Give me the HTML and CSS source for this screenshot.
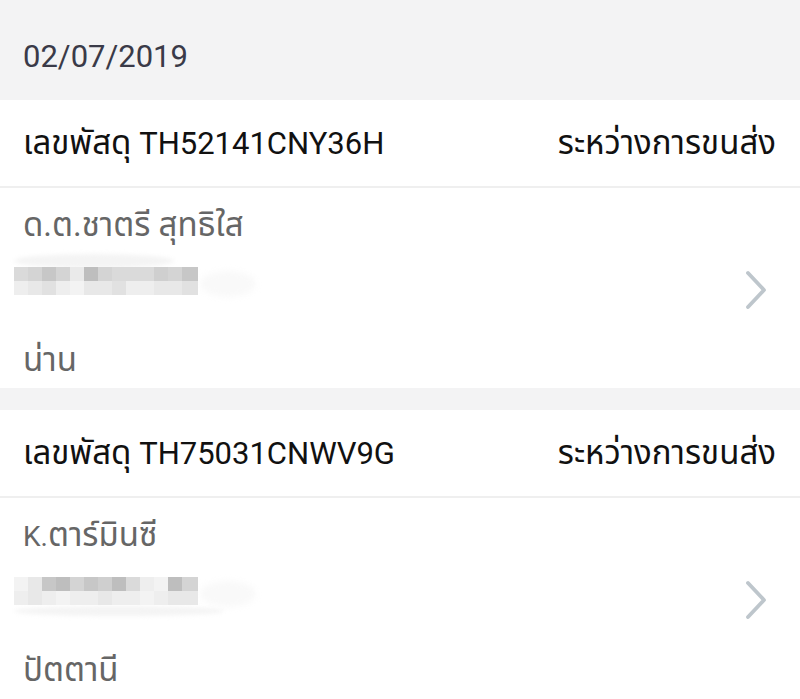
FILE: index.html
```html
<!DOCTYPE html>
<html lang="th">
<head>
<meta charset="utf-8">
<title>พัสดุ</title>
<link rel="stylesheet" href="styles.css">
</head>
<body>
<div class="page">
  <div class="date-head">02/07/2019</div>

  <section class="card">
    <div class="card-head">
      <span class="track"><span class="th">เลขพัสดุ</span> TH52141CNY36H</span>
      <span class="status th">ระหว่างการขนส่ง</span>
    </div>
    <div class="card-body">
      <div class="info">
        <div class="name"><span class="th">ด.ต.ชาตรี สุทธิใส</span></div>
        <div class="phone">
          <div class="halo halo-top"></div>
          <div class="pix-row">
            <span class="p s3"></span><span class="p s4"></span><span class="p s6"></span><span class="p s4"></span><span class="p s1"></span><span class="p s7"></span><span class="p s4"></span><span class="p s3"></span><span class="p s3"></span><span class="p s3"></span><span class="p s5"></span><span class="p s4"></span><span class="p s6"></span>
          </div>
          <div class="pix-row">
            <span class="p t1"></span><span class="p t2"></span><span class="p t3"></span><span class="p t1"></span><span class="p t0"></span><span class="p t2"></span><span class="p t2"></span><span class="p t3"></span><span class="p t1"></span><span class="p t1"></span><span class="p t2"></span><span class="p t2"></span><span class="p t3"></span>
          </div>
          <div class="fade"></div>
        </div>
        <div class="city"><span class="th">น่าน</span></div>
      </div>
      <svg class="chev" width="24" height="40" viewBox="0 0 24 40"><polyline points="4,3 20,20 4,37" fill="none" stroke="#bec6cc" stroke-width="3.8" stroke-linecap="round" stroke-linejoin="round"/></svg>
    </div>
  </section>

  <section class="card last">
    <div class="card-head">
      <span class="track"><span class="th">เลขพัสดุ</span> TH75031CNWV9G</span>
      <span class="status th">ระหว่างการขนส่ง</span>
    </div>
    <div class="card-body">
      <div class="info">
        <div class="name">K.<span class="th">ตาร์มินซี</span></div>
        <div class="phone">
          <div class="pix-row">
            <span class="p t0"></span><span class="p t2"></span><span class="p s6"></span><span class="p s7"></span><span class="p s4"></span><span class="p s6"></span><span class="p s5"></span><span class="p s7"></span><span class="p s3"></span><span class="p t1"></span><span class="p t0"></span><span class="p s7"></span><span class="p s4"></span>
          </div>
          <div class="pix-row">
            <span class="p t1"></span><span class="p t2"></span><span class="p t1"></span><span class="p t0"></span><span class="p t1"></span><span class="p t1"></span><span class="p t2"></span><span class="p t1"></span><span class="p t1"></span><span class="p t0"></span><span class="p t1"></span><span class="p t2"></span><span class="p t2"></span>
          </div>
          <div class="halo halo-bottom"></div>
          <div class="fade"></div>
        </div>
        <div class="city"><span class="th">ปัตตานี</span></div>
      </div>
      <svg class="chev" width="24" height="40" viewBox="0 0 24 40"><polyline points="4,3 20,20 4,37" fill="none" stroke="#bec6cc" stroke-width="3.8" stroke-linecap="round" stroke-linejoin="round"/></svg>
    </div>
  </section>
</div>
</body>
</html>
```

FILE: styles.css
```css
html, body {
  margin: 0;
  padding: 0;
}
body {
  background: #f3f3f4;
  font-family: Roboto, "Noto Sans Thai", "Noto Sans Thai UI", "Noto Sans", "DejaVu Sans", sans-serif;
  overflow: hidden;
}
.page {
  width: 800px;
  display: flex;
  flex-direction: column;
}
.date-head {
  height: 100px;
  padding-left: 23px;
  font-size: 31px;
  line-height: 114px;
  color: #3a3a48;
}
.card {
  background: #fff;
}
.card + .card {
  margin-top: 22px;
}
.th {
  font-size: 33px;
}
.card-head {
  height: 86px;
  display: flex;
  align-items: center;
  justify-content: space-between;
  padding: 0 24px 0 23px;
  border-bottom: 2px solid #efefef;
  font-size: 31px;
  line-height: 40px;
  color: #111;
}
.card-body {
  height: 200px;
  display: flex;
  align-items: center;
  justify-content: space-between;
  padding: 0 32px 0 23px;
}
.card.last .card-body {
  height: 201px;
}
.info {
  display: flex;
  flex-direction: column;
  align-self: stretch;
}
.name {
  font-size: 28px;
  line-height: 40px;
  height: 40px;
  margin-top: 17px;
  color: #666;
}
.city {
  font-size: 28px;
  line-height: 40px;
  height: 40px;
  margin-top: 29px;
  color: #666;
}
.phone {
  position: relative;
  margin-left: -9px;
  margin-top: 6px;
  height: 60px;
  display: flex;
  flex-direction: column;
  justify-content: center;
}
.pix-row {
  display: flex;
  position: relative;
  z-index: 1;
}
.p {
  width: 14px;
  height: 14px;
  display: block;
}
.pix-row .p:last-child { width: 16px; }
.s1 { background: #eaeaea; }
.s3 { background: #dadada; }
.s4 { background: #d4d4d4; }
.s5 { background: #cfcfcf; }
.s6 { background: #c7c7c7; }
.s7 { background: #bebebe; }
.t0 { background: #f3f3f3; }
.t1 { background: #eeeeee; }
.t2 { background: #e8e8e8; }
.t3 { background: #e1e1e1; }
.halo {
  position: absolute;
  left: 0;
  width: 160px;
  height: 14px;
  border-radius: 50%;
  background: #f4f4f4;
  filter: blur(2px);
}
.halo-top { top: 3px; }
.halo-bottom { bottom: 5px; width: 210px; height: 10px; }
.fade {
  position: absolute;
  left: 186px;
  top: 20px;
  width: 56px;
  height: 26px;
  border-radius: 50%;
  background: #f9f9f9;
  filter: blur(3px);
}
.chev {
  display: block;
  margin-top: 3px;
}
```
